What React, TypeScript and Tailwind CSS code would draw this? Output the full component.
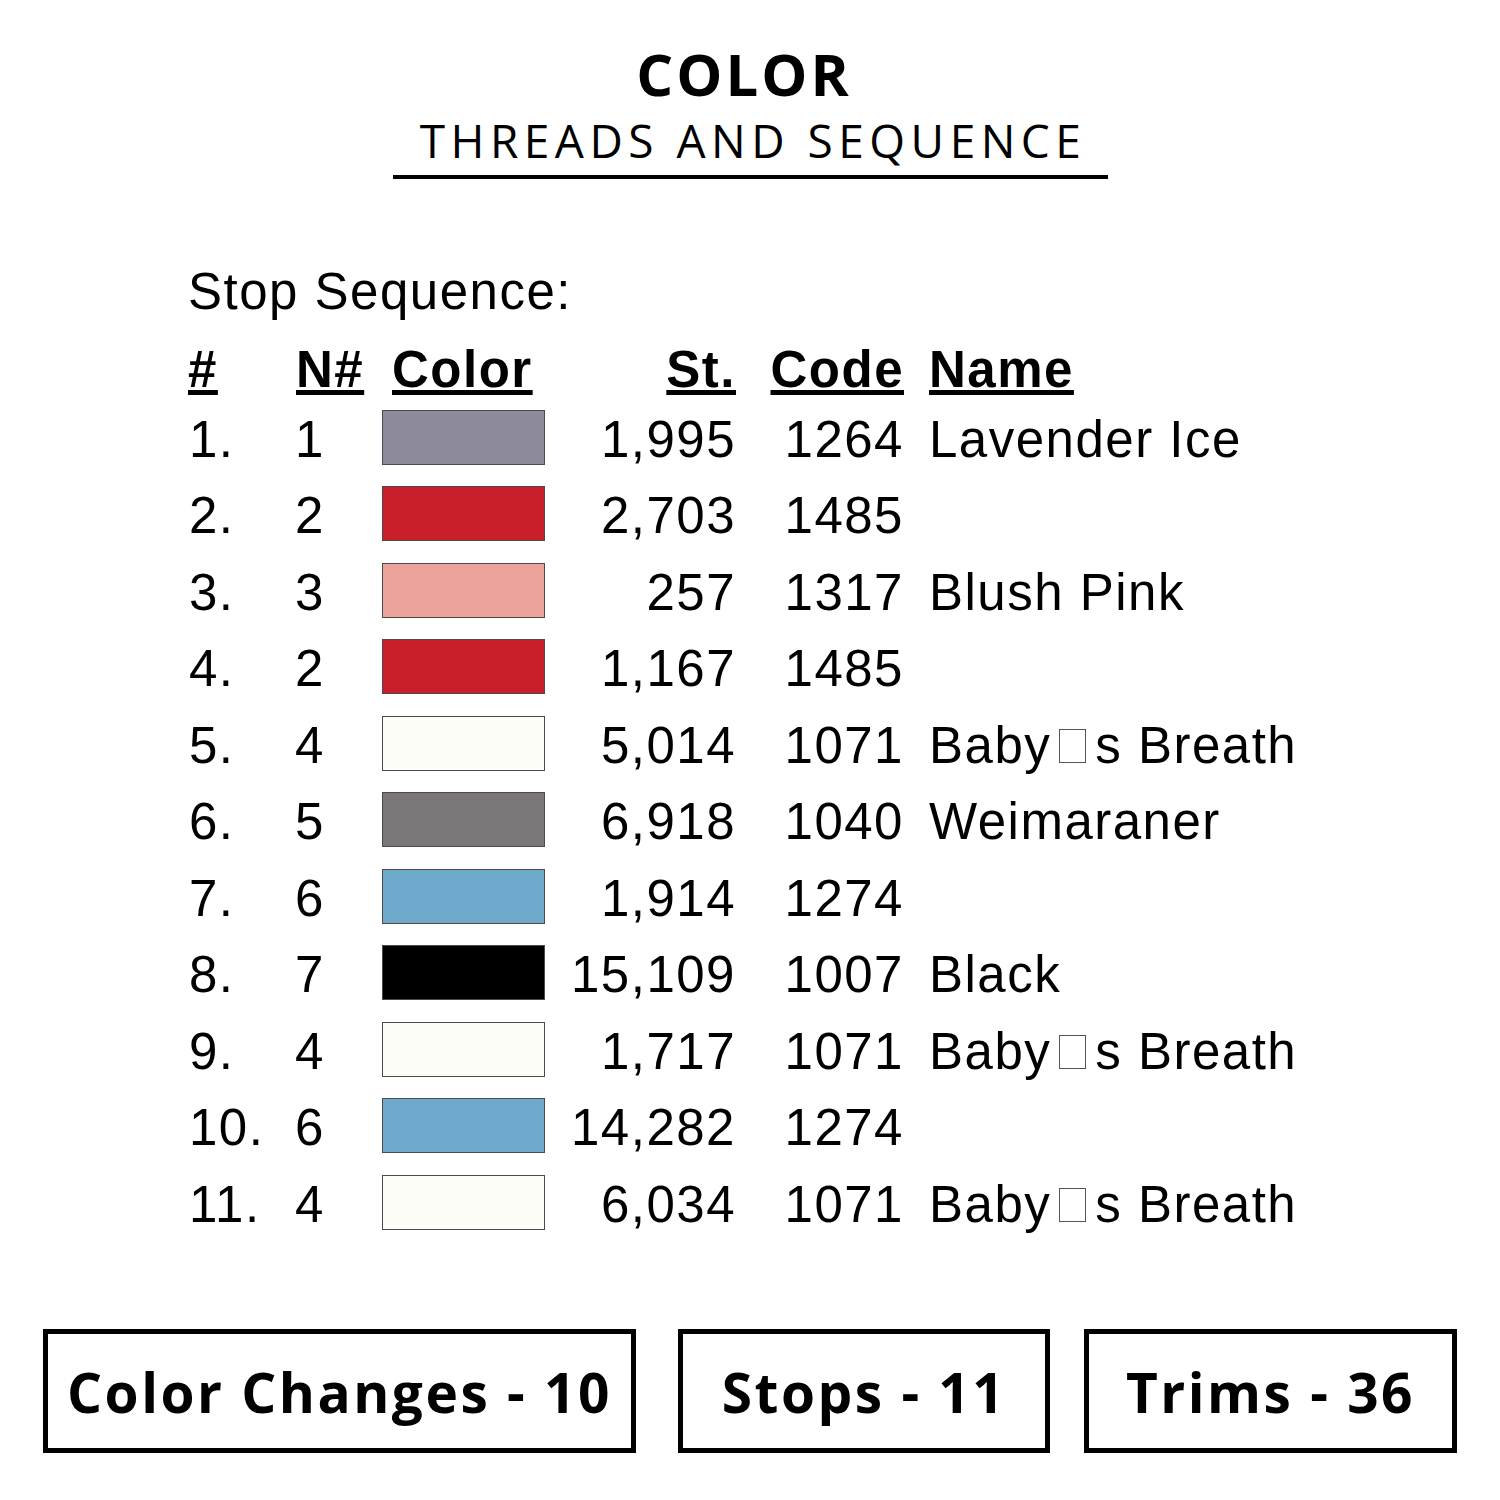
import React from 'react';

type Row = {
  n: string;
  needle: string;
  color: string;
  st: string;
  code: string;
  name?: string;
};

const rows: Row[] = [
  { n: '1.', needle: '1', color: 'bg-[#8d8b9b]', st: '1,995', code: '1264', name: 'Lavender Ice' },
  { n: '2.', needle: '2', color: 'bg-[#c91f2a]', st: '2,703', code: '1485' },
  { n: '3.', needle: '3', color: 'bg-[#eca39b]', st: '257', code: '1317', name: 'Blush Pink' },
  { n: '4.', needle: '2', color: 'bg-[#c91f2a]', st: '1,167', code: '1485' },
  { n: '5.', needle: '4', color: 'bg-[#fdfdf8]', st: '5,014', code: '1071', name: 'Baby_s Breath' },
  { n: '6.', needle: '5', color: 'bg-[#7b7677]', st: '6,918', code: '1040', name: 'Weimaraner' },
  { n: '7.', needle: '6', color: 'bg-[#6ea8cb]', st: '1,914', code: '1274' },
  { n: '8.', needle: '7', color: 'bg-black', st: '15,109', code: '1007', name: 'Black' },
  { n: '9.', needle: '4', color: 'bg-[#fdfdf8]', st: '1,717', code: '1071', name: 'Baby_s Breath' },
  { n: '10.', needle: '6', color: 'bg-[#6ea8cb]', st: '14,282', code: '1274' },
  { n: '11.', needle: '4', color: 'bg-[#fdfdf8]', st: '6,034', code: '1071', name: 'Baby_s Breath' },
];

// the missing apostrophe shows up as an empty box in the source printout
const ThreadName: React.FC<{ name: string }> = ({ name }) => {
  const parts = name.split('_');
  if (parts.length === 1) return <>{name}</>;
  return (
    <>
      {parts[0]}
      <span className="inline-block w-[27px] h-[34px] border-[1.5px] border-[#555] align-baseline ml-[8px] mr-[9px]" />
      {parts[1]}
    </>
  );
};

const grid = 'grid grid-cols-[108px_87px_163px_190px_168px_auto]';

export default function App() {
  return (
    <div className="w-[1500px] h-[1500px] bg-white text-black flex flex-col">
      {/* Title */}
      <div className="flex flex-col items-center">
        <h1 className="mt-[45px] pr-[12px] font-['Open_Sans',sans-serif] font-bold text-[58px] leading-none tracking-[3px]">
          COLOR
        </h1>
        <h2 className="mt-[14px] pl-[6px] font-['Open_Sans',sans-serif] text-[46px] leading-none tracking-[5.5px]">
          THREADS AND SEQUENCE
        </h2>
        <div className="mt-[12px] w-[715px] h-[4px] bg-black" />
      </div>

      {/* Stop sequence table */}
      <div className="pl-[188px] mt-[87px] font-['Liberation_Sans',Arial,sans-serif] text-[51px] tracking-[1.5px] leading-none">
        <div>Stop Sequence:</div>

        <div className={`${grid} mt-[27px] font-bold underline decoration-[5px] underline-offset-[3px]`}>
          <div>#</div>
          <div>N#</div>
          <div className="pl-[9px]">Color</div>
          <div className="text-right">St.</div>
          <div className="text-right">Code</div>
          <div className="pl-[25px]">Name</div>
        </div>

        <div className="mt-[4px]">
          {rows.map((r, i) => (
            <div key={i} className={`${grid} h-[76.5px] items-center`}>
              <div className="pt-[4px] pl-[1px]">{r.n}</div>
              <div className="pt-[4px] -ml-[1px]">{r.needle}</div>
              <div className={`-ml-[1px] mr-[1px] h-[55px] border-[1.5px] border-[#4a4a4a] ${r.color}`} />
              <div className="pt-[4px] text-right">{r.st}</div>
              <div className="pt-[4px] text-right">{r.code}</div>
              <div className="pt-[4px] pl-[25px] whitespace-nowrap">
                {r.name ? <ThreadName name={r.name} /> : null}
              </div>
            </div>
          ))}
        </div>
      </div>

      {/* Totals */}
      <div className="mt-auto mb-[47px] pl-[43px] flex items-stretch font-['Open_Sans',sans-serif] font-bold text-[55px] leading-none tracking-[2.5px]">
        <div className="w-[593px] h-[124px] border-[5px] border-black flex items-center justify-center">
          Color Changes - 10
        </div>
        <div className="ml-[42px] w-[372px] h-[124px] border-[5px] border-black flex items-center justify-center">
          Stops - 11
        </div>
        <div className="ml-[34px] w-[373px] h-[124px] border-[5px] border-black flex items-center justify-center">
          Trims - 36
        </div>
      </div>
    </div>
  );
}
